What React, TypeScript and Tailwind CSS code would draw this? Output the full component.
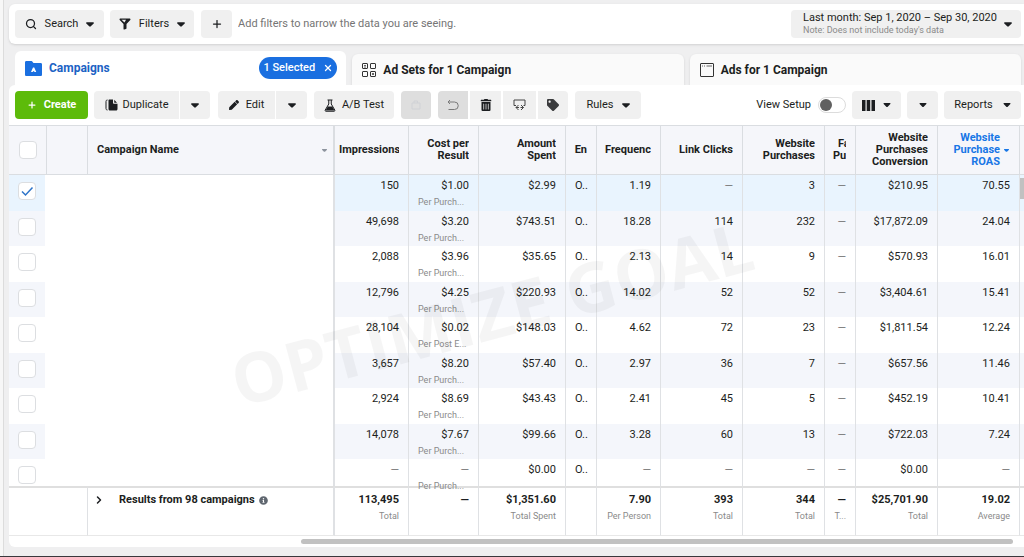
import { useState } from 'react'
import type { ReactNode } from 'react'
import { Search, Plus, X, ChevronRight } from 'lucide-react'
import { FaPen, FaTag, FaInfoCircle, FaTrashAlt } from 'react-icons/fa'

const rows = [
  { id: 1, values: ['150', '$1.00', '$2.99', 'O..', '1.19', '—', '3', '—', '$210.95', '70.55'], per: 'Per Purch...' },
  { id: 2, values: ['49,698', '$3.20', '$743.51', 'O..', '18.28', '114', '232', '—', '$17,872.09', '24.04'], per: 'Per Purch...' },
  { id: 3, values: ['2,088', '$3.96', '$35.65', 'O..', '2.13', '14', '9', '—', '$570.93', '16.01'], per: 'Per Purch...' },
  { id: 4, values: ['12,796', '$4.25', '$220.93', 'O..', '14.02', '52', '52', '—', '$3,404.61', '15.41'], per: 'Per Purch...' },
  { id: 5, values: ['28,104', '$0.02', '$148.03', 'O..', '4.62', '72', '23', '—', '$1,811.54', '12.24'], per: 'Per Post E...' },
  { id: 6, values: ['3,657', '$8.20', '$57.40', 'O..', '2.97', '36', '7', '—', '$657.56', '11.46'], per: 'Per Purch...' },
  { id: 7, values: ['2,924', '$8.69', '$43.43', 'O..', '2.41', '45', '5', '—', '$452.19', '10.41'], per: 'Per Purch...' },
  { id: 8, values: ['14,078', '$7.67', '$99.66', 'O..', '3.28', '60', '13', '—', '$722.03', '7.24'], per: 'Per Purch...' },
  { id: 9, values: ['—', '—', '$0.00', 'O..', '—', '—', '—', '—', '$0.00', '—'], per: 'Per Purch...' },
]

const totals = [
  ['113,495', 'Total'],
  ['—', ''],
  ['$1,351.60', 'Total Spent'],
  ['', ''],
  ['7.90', 'Per Person'],
  ['393', 'Total'],
  ['344', 'Total'],
  ['—', 'T...'],
  ['$25,701.90', 'Total'],
  ['19.02', 'Average'],
]

const headers = [
  ['Impressions'],
  ['Cost per', 'Result'],
  ['Amount', 'Spent'],
  ['En'],
  ['Frequenc'],
  ['Link Clicks'],
  ['Website', 'Purchases'],
  ['Fa', 'Pu'],
  ['Website', 'Purchases', 'Conversion'],
]

function Caret({ className = 'w-2 h-[5px]' }: { className?: string }) {
  return (
    <svg viewBox="0 0 18 10" className={`shrink-0 ${className}`} fill="currentColor" aria-hidden="true">
      <path d="M2 0h14c1.800 0 2.500 1.600 1.300 2.800l-6.500 6.300c-1 1-2.600 1-3.600 0L.7 2.800C-.5 1.600.2 0 2 0z" />
    </svg>
  )
}

function FunnelIcon() {
  return (
    <svg viewBox="0 0 24 24" className="w-3 h-3 shrink-0" aria-hidden="true">
      <path fill="currentColor" d="M1 2.500C1 1.500 2 1 3 1h18c1 0 2 .5 2 1.500 0 .7-.4 1.200-.9 1.800L15 12v8.500c0 .8-.5 1.200-1.200 1.500l-3 1c-1 .3-1.800-.2-1.800-1.200V12L1.900 4.300C1.400 3.700 1 3.200 1 2.500z" />
      <path fill="#f0f0f0" d="M5 3.500h9L11 9z" />
    </svg>
  )
}

function DuplicateIcon() {
  return (
    <svg viewBox="0 0 26 24" className="w-[13px] h-3 shrink-0" aria-hidden="true">
      <path d="M5 2C3 2 2 3 2 5v14c0 2 1 3 3 3" fill="none" stroke="currentColor" strokeWidth="2" />
      <path fill="currentColor" d="M9 1h7v7c0 1 .6 1.600 1.600 1.600H25V20c0 1.700-1 3-3 3H10c-2 0-3-1.300-3-3V3c0-1.200.8-2 2-2zm9.500.5L24 7.500h-5.500z" />
    </svg>
  )
}

function FlaskIcon() {
  return (
    <svg viewBox="0 0 24 26" className="w-3 h-[13px] shrink-0" aria-hidden="true">
      <path d="M7 2h10M9.500 2v8L2.500 22c-.7 1.500 0 2.500 1.500 2.500h16c1.500 0 2.200-1 1.500-2.500L14.500 10V2" fill="none" stroke="currentColor" strokeWidth="2" />
      <path d="M7.500 15h9l4.500 8H3z" fill="currentColor" />
    </svg>
  )
}

function UndoIcon() {
  return (
    <svg viewBox="0 0 24 24" className="w-3 h-3" fill="none" stroke="currentColor" strokeWidth="2" aria-hidden="true">
      <path d="M6 2L2 6l4 4M2 6h13a7.500 7.500 0 0 1 0 15H3" />
    </svg>
  )
}

function ExchangeIcon() {
  return (
    <svg viewBox="0 0 26 26" className="w-[13px] h-[13px]" fill="none" stroke="currentColor" strokeWidth="2" aria-hidden="true">
      <path d="M6 13H2V2h22v11h-3M11 12l-5 5 5 5M6 17h6M16 12l5 5-5 5M21 17h-6" />
    </svg>
  )
}

function CampaignsIcon() {
  return (
    <svg viewBox="0 0 34 30" className="w-[17px] h-[15px] shrink-0" aria-hidden="true">
      <path fill="#1a6fe0" d="M3 0h9c2 0 3 1 4 3l1 1h14c2 0 3 1 3 3v20c0 2-1 3-3 3H3c-2 0-3-1-3-3V3c0-2 1-3 3-3z" />
      <path fill="#fff" d="M16 13h2.500l4 9h-3l-2.200-2-2.300 2h-3z" />
    </svg>
  )
}

function AdSetsIcon() {
  return (
    <svg viewBox="0 0 28 28" className="w-3.5 h-3.5 shrink-0" fill="none" stroke="#333" strokeWidth="2" aria-hidden="true">
      <rect x="1" y="1" width="10" height="10" rx="1" />
      <rect x="17" y="1" width="10" height="10" rx="1" />
      <rect x="1" y="17" width="10" height="10" rx="1" />
      <rect x="17" y="17" width="10" height="10" rx="1" />
      <path d="M4 5h4M4 8h4M20 20l4 4M24 20l-4 4" strokeWidth="1.500" />
    </svg>
  )
}

function AdsIcon() {
  return (
    <svg viewBox="0 0 28 28" className="w-3.5 h-3.5 shrink-0" fill="none" stroke="#333" strokeWidth="2" aria-hidden="true">
      <rect x="1" y="1" width="26" height="26" rx="1" />
      <path d="M4 6h2M8 6h2M13 6h11" strokeWidth="1.500" />
    </svg>
  )
}

function ToolButton({ label, className, children }: { label?: string; className: string; children: ReactNode }) {
  return (
    <button type="button" aria-label={label} className={`h-7 flex items-center justify-center shrink-0 whitespace-nowrap ${className}`}>
      {children}
    </button>
  )
}

function CheckBox({ label, checked, onChange }: { label: string; checked: boolean; onChange: () => void }) {
  return (
    <span className="relative block w-[18px] h-[18px] mx-auto">
      <input
        type="checkbox"
        aria-label={label}
        checked={checked}
        onChange={onChange}
        className="block appearance-none w-[18px] h-[18px] rounded border border-[#dcdee1] bg-white"
      />
      {checked && (
        <svg viewBox="0 0 18 18" className="absolute inset-0 pointer-events-none" fill="none" stroke="#2d74c9" strokeWidth="1.500" aria-hidden="true">
          <path d="M4 9.500l3.500 3.500L14.500 5.500" />
        </svg>
      )}
    </span>
  )
}

export default function App() {
  const [selected, setSelected] = useState([1])
  const [viewSetup, setViewSetup] = useState(false)

  const toggle = (id: number) =>
    setSelected((s) => (s.includes(id) ? s.filter((v) => v !== id) : [...s, id]))

  return (
    <div className="min-h-screen flex bg-[#f7f7f7] border-b border-[#3a383d] text-[#1c1e21] font-[Roboto,'Liberation_Sans',sans-serif] text-[11px] overflow-hidden">
      <div className="flex-1 min-w-0 ml-[3px] pl-[5px] pt-1 pb-[9px] border-l border-[#dcdcdc] bg-[#efeff0]">
        {/* Filter bar */}
        <div className="h-10 flex items-center bg-white rounded-l-md pl-1.5 pr-[3px] shadow-sm">
          <ToolButton className="w-[89px] gap-2 rounded bg-[#f0f0f0]">
            <Search className="w-3 h-3" strokeWidth={2.5} /> Search <Caret />
          </ToolButton>
          <ToolButton className="w-[84px] ml-1.5 gap-2 rounded bg-[#f0f0f0]">
            <FunnelIcon /> Filters <Caret />
          </ToolButton>
          <ToolButton label="Add filter" className="w-[31px] ml-[7px] rounded bg-[#f0f0f0]">
            <Plus className="w-3 h-3" strokeWidth={2.5} />
          </ToolButton>
          <input
            aria-label="Add filters"
            placeholder="Add filters to narrow the data you are seeing."
            className="flex-1 min-w-0 ml-1.5 mr-4 placeholder:text-[#757575] outline-none"
          />
          <ToolButton className="w-[230px] rounded bg-[#f0f0f0] pl-3 pr-[9px]">
            <span className="mr-auto text-left">
              <span className="block text-[11px] leading-3">Last month: Sep 1, 2020 – Sep 30, 2020</span>
              <span className="block text-[9px] leading-3 text-[#8a8a8a]">Note: Does not include today's data</span>
            </span>
            <Caret />
          </ToolButton>
        </div>

        {/* Level tabs */}
        <div className="grid grid-cols-3 items-end gap-1.5 mt-[7px] pl-1.5 pr-[3px]">
          <div className="h-[34px] flex items-center bg-white rounded-t-md pl-2.5 pr-[9px]">
            <button type="button" className="flex items-center gap-[7px] text-xs font-bold text-[#1b62c4]">
              <CampaignsIcon /> Campaigns
            </button>
            <button type="button" className="ml-auto w-[78px] h-[22px] flex items-center justify-center gap-2 whitespace-nowrap rounded-full bg-[#1a6fe0] text-white font-medium">
              1 Selected <X className="w-2.5 h-2.5 shrink-0" strokeWidth={3} />
            </button>
          </div>
          <button type="button" className="h-[31px] flex items-center gap-[7px] rounded-t-md bg-[#fafafa] shadow-sm pl-2.5 text-xs font-bold">
            <AdSetsIcon /> Ad Sets for 1 Campaign
          </button>
          <button type="button" className="h-[31px] flex items-center gap-[7px] rounded-t-md bg-[#fafafa] shadow-sm pl-2.5 text-xs font-bold">
            <AdsIcon /> Ads for 1 Campaign
          </button>
        </div>

        <div className="relative bg-white rounded-l-md">
          {/* Toolbar */}
          <div className="h-10 flex items-center pl-1.5 pr-[3px]">
            <ToolButton className="w-[73px] gap-[7px] rounded bg-[#5dbb0a] text-white font-bold">
              <Plus className="w-2.5 h-2.5" strokeWidth={3} /> Create
            </ToolButton>
            <ToolButton className="w-[85px] ml-1.5 gap-[5px] rounded-l bg-[#f0f0f0]">
              <DuplicateIcon /> Duplicate
            </ToolButton>
            <ToolButton label="Duplicate options" className="w-[30px] ml-px rounded-r bg-[#f0f0f0]"><Caret /></ToolButton>
            <ToolButton className="w-[57px] ml-2 gap-[7px] rounded-l bg-[#f0f0f0]">
              <FaPen className="w-2.5 h-2.5" /> Edit
            </ToolButton>
            <ToolButton label="Edit options" className="w-[31px] ml-px rounded-r bg-[#f0f0f0]"><Caret /></ToolButton>
            <ToolButton className="w-20 ml-[7px] gap-1.5 rounded bg-[#f0f0f0]">
              <FlaskIcon /> A/B Test
            </ToolButton>
            <ToolButton label="Save" className="w-[30px] ml-[7px] rounded bg-[#dedede] text-[#d0d2d6]">
              <svg viewBox="0 0 20 20" className="w-2.5 h-2.5" fill="none" stroke="currentColor" strokeWidth="2" aria-hidden="true">
                <path d="M2 6h16v12H2zM6 6V2h7v4" />
              </svg>
            </ToolButton>
            <ToolButton label="Undo" className="w-[30px] ml-[7px] rounded-l bg-[#dedede] text-[#7a7a7a]">
              <UndoIcon />
            </ToolButton>
            <ToolButton label="Delete" className="w-[31px] ml-0.5 bg-[#f0f0f0]">
              <FaTrashAlt className="w-3 h-3" />
            </ToolButton>
            <ToolButton label="Export" className="w-[33px] ml-0.5 bg-[#f0f0f0] text-[#444]">
              <ExchangeIcon />
            </ToolButton>
            <ToolButton label="Tag" className="w-[30px] ml-0.5 rounded-r bg-[#f0f0f0] text-[#3a3b3d]">
              <FaTag className="w-3 h-3" />
            </ToolButton>
            <ToolButton className="w-[66px] ml-[7px] gap-2 rounded bg-[#f0f0f0]">Rules <Caret /></ToolButton>

            <label className="ml-auto flex items-center gap-[7px] whitespace-nowrap">
              View Setup
              <input
                type="checkbox"
                role="switch"
                checked={viewSetup}
                onChange={() => setViewSetup(!viewSetup)}
                className="appearance-none w-7 h-4 p-px rounded-full border border-[#dcdcdc] bg-white before:block before:w-3 before:h-3 before:rounded-full before:bg-[#606060] checked:before:ml-auto"
              />
            </label>
            <ToolButton label="Columns" className="w-[49px] ml-1.5 gap-2 rounded bg-[#f0f0f0]">
              <svg viewBox="0 0 13 11" className="w-[13px] h-[11px]" fill="currentColor" aria-hidden="true">
                <path d="M0 0h3.500v11H0zM4.700 0h3.500v11H4.700zM9.500 0H13v11H9.500z" />
              </svg>
              <Caret className="w-2 h-1" />
            </ToolButton>
            <ToolButton label="Breakdown" className="w-[31px] ml-1.5 rounded bg-[#f0f0f0]"><Caret className="w-2 h-1" /></ToolButton>
            <ToolButton className="w-[77px] ml-1.5 gap-2.5 rounded bg-[#f0f0f0]">Reports <Caret className="w-2 h-1" /></ToolButton>
          </div>

          {/* Campaign table */}
          <table className="w-full table-fixed border-separate border-spacing-0">
            <colgroup>
              <col className="w-[38px]" />
              <col className="w-[41px]" />
              <col />
              <col className="w-[74px]" />
              <col className="w-[70px]" />
              <col className="w-[87px]" />
              <col className="w-[31px]" />
              <col className="w-[64px]" />
              <col className="w-[82px]" />
              <col className="w-[82px]" />
              <col className="w-[31px]" />
              <col className="w-[82px]" />
              <col className="w-[82px]" />
              <col className="w-[4px]" />
            </colgroup>
            <thead>
              <tr className="h-[50px] *:border-y *:border-[#dadde1] *:bg-[#f5f6fa] *:p-0">
                <th className="border-r"><CheckBox label="Select all" checked={false} onChange={() => setSelected([])} /></th>
                <th className="border-r" aria-label="Status" />
                <th className="border-r-2">
                  <div className="flex items-center justify-between pl-[9px] pr-1.5">
                    Campaign Name <Caret className="w-[5px] h-[3px] text-[#8d949e]" />
                  </div>
                </th>
                {headers.map((lines) => (
                  <th key={lines.join(' ')} className="border-r">
                    <div className="overflow-hidden ml-1 mr-[9px] text-right leading-3 whitespace-nowrap">
                      {lines.map((line) => (
                        <span key={line} className={line === 'Fa' ? 'block text-left pl-[9px]' : line === 'Pu' ? 'block text-left pl-1' : 'block'}>{line}</span>
                      ))}
                    </div>
                  </th>
                ))}
                <th className="border-r">
                  <div className="flex items-center justify-end gap-1 pr-2.5 text-right leading-3 text-[#1877e6]">
                    <span>Website<br />Purchase<br />ROAS</span>
                    <Caret className="w-[5px] h-[3px]" />
                  </div>
                </th>
                <th aria-label="Scroll" />
              </tr>
            </thead>
            <tbody>
              {rows.map((row, idx) => {
                const isSelected = selected.includes(row.id)
                const bg = isSelected ? 'bg-[#e9f4fe]' : idx % 2 ? 'bg-[#f4f6fb]' : 'bg-white'
                const height = idx === rows.length - 1 ? 'h-[27px]' : idx % 2 ? 'h-[35px]' : 'h-9'
                return (
                  <tr key={row.id} className="align-top">
                    <td className="p-0">
                      <div className={`w-9 pt-[7px] ${height} ${bg}`}>
                        <CheckBox label={`Select campaign ${row.id}`} checked={isSelected} onChange={() => toggle(row.id)} />
                      </div>
                    </td>
                    <td />
                    <td className="border-r-2 border-[#dfe1e4]" />
                    {row.values.map((value, col) => (
                      <td key={col} className={`p-0 border-r border-[#dfe1e4] ${bg}`}>
                        <div className={`pt-[3px] px-[9px] text-right whitespace-nowrap leading-4 ${height} ${value === '—' ? 'text-[#777]' : ''}`}>
                          {value}
                          {col === 1 && <span className="block text-left text-[9px] text-[#8a8a8a]">{row.per}</span>}
                        </div>
                      </td>
                    ))}
                    <td className={`p-0 ${bg}`}>
                      {idx === 0 && <div className="mt-[3px] h-[21px] bg-[#c1c1c1]" />}
                    </td>
                  </tr>
                )
              })}
            </tbody>
            <tfoot>
              <tr className="h-[50px] align-top *:border-t-2 *:border-b *:border-t-[#dfdfdf] *:border-b-[#e8e8e8] *:border-r-[#dfe1e4] *:p-0">
                <td colSpan={2} className="border-r" />
                <td className="border-r-2">
                  <div className="flex items-center pt-1 pl-[5px] leading-4 font-bold whitespace-nowrap">
                    <button type="button" aria-label="Expand results" className="mr-3.5">
                      <ChevronRight className="w-3 h-3" strokeWidth={3} />
                    </button>
                    Results from 98 campaigns
                    <FaInfoCircle className="w-[9px] h-[9px] ml-1 text-[#606770]" />
                  </div>
                </td>
                {totals.map(([value, note], col) => (
                  <td key={col} className="border-r">
                    <div className="pt-1 px-[9px] text-right whitespace-nowrap leading-4">
                      <span className="block font-bold">{value}</span>
                      <span className="block text-[9px] text-[#8a8a8a]">{note}</span>
                    </div>
                  </td>
                ))}
                <td />
              </tr>
            </tfoot>
          </table>

          {/* Horizontal scrollbar */}
          <div className="h-[11px] pt-[3px] pl-[292px] pr-[11px]">
            <div className="h-[5px] rounded-full bg-[#c1c1c1]" />
          </div>

          <div className="absolute inset-x-0 top-44 pr-[50px] text-center pointer-events-none" aria-hidden="true">
            <span className="inline-block -rotate-15 whitespace-nowrap font-['Open_Sans',sans-serif] font-bold text-[69px] text-black/4">
              OPTIMIZE GOAL
            </span>
          </div>
        </div>
      </div>
    </div>
  )
}
